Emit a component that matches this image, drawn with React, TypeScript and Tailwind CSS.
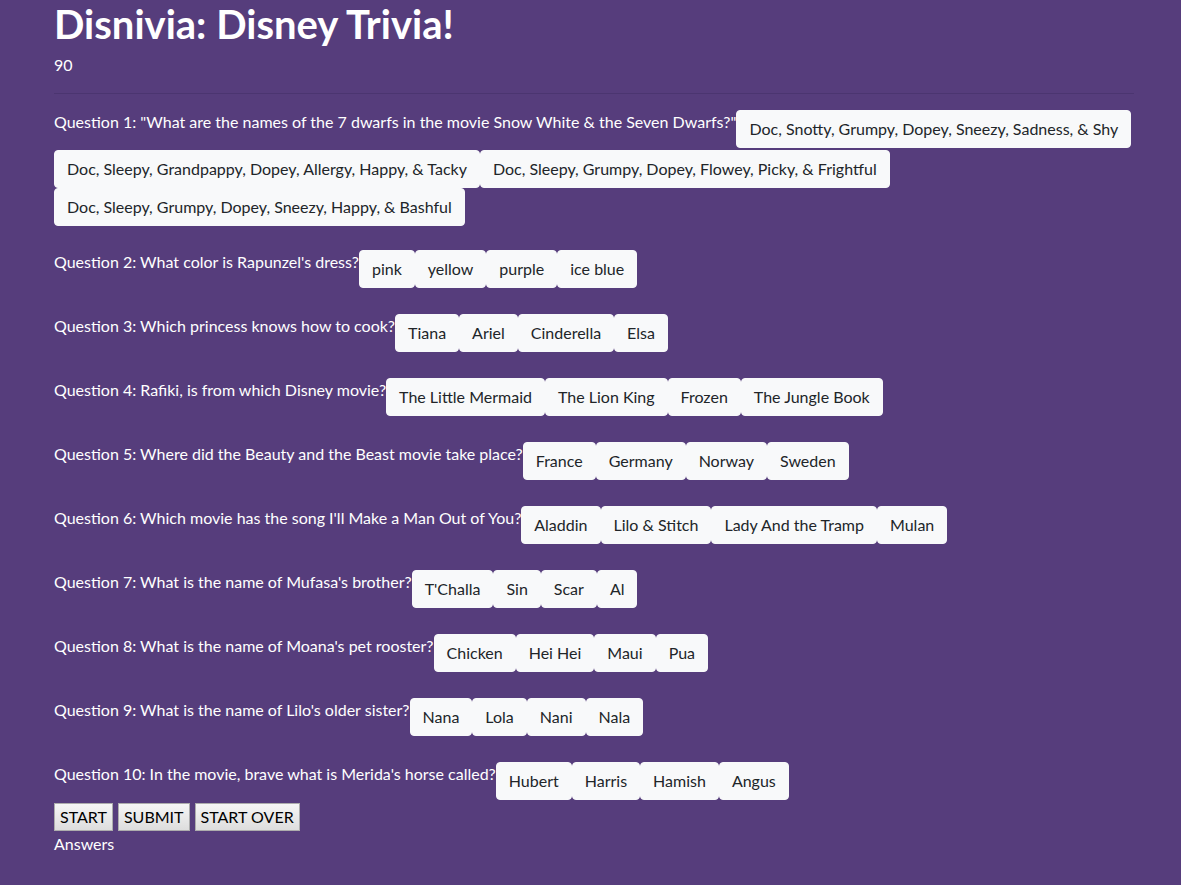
import React from "react";

const questions: { q: string; a: string[] }[] = [
  {
    q: 'Question 1: "What are the names of the 7 dwarfs in the movie Snow White & the Seven Dwarfs?"',
    a: [
      "Doc, Snotty, Grumpy, Dopey, Sneezy, Sadness, & Shy",
      "Doc, Sleepy, Grandpappy, Dopey, Allergy, Happy, & Tacky",
      "Doc, Sleepy, Grumpy, Dopey, Flowey, Picky, & Frightful",
      "Doc, Sleepy, Grumpy, Dopey, Sneezy, Happy, & Bashful",
    ],
  },
  { q: "Question 2: What color is Rapunzel's dress?", a: ["pink", "yellow", "purple", "ice blue"] },
  { q: "Question 3: Which princess knows how to cook?", a: ["Tiana", "Ariel", "Cinderella", "Elsa"] },
  {
    q: "Question 4: Rafiki, is from which Disney movie?",
    a: ["The Little Mermaid", "The Lion King", "Frozen", "The Jungle Book"],
  },
  {
    q: "Question 5: Where did the Beauty and the Beast movie take place?",
    a: ["France", "Germany", "Norway", "Sweden"],
  },
  {
    q: "Question 6: Which movie has the song I'll Make a Man Out of You?",
    a: ["Aladdin", "Lilo & Stitch", "Lady And the Tramp", "Mulan"],
  },
  { q: "Question 7: What is the name of Mufasa's brother?", a: ["T'Challa", "Sin", "Scar", "Al"] },
  { q: "Question 8: What is the name of Moana's pet rooster?", a: ["Chicken", "Hei Hei", "Maui", "Pua"] },
  { q: "Question 9: What is the name of Lilo's older sister?", a: ["Nana", "Lola", "Nani", "Nala"] },
  {
    q: "Question 10: In the movie, brave what is Merida's horse called?",
    a: ["Hubert", "Harris", "Hamish", "Angus"],
  },
];

function Question({ q, a }: { q: string; a: string[] }) {
  return (
    <div className="flex flex-wrap items-start">
      <span className="h-10 leading-6 whitespace-nowrap">{q}</span>
      {a.map((ans) => (
        <button
          key={ans}
          type="button"
          className="h-[38px] px-3 py-[6px] leading-6 text-[16px] bg-[#f8f9fa] text-[#212529] border border-[#f8f9fa] rounded-[4px] whitespace-nowrap"
        >
          {ans}
        </button>
      ))}
    </div>
  );
}

function SysButton({ label }: { label: string }) {
  return (
    <button
      type="button"
      className="h-[28px] px-[5px] text-[16px] leading-5 text-black border border-[#adadad] bg-gradient-to-b from-[#f6f6f6] to-[#dddddd]"
    >
      {label}
    </button>
  );
}

export default function App() {
  return (
    <div
      className="min-h-[885px] bg-[#563d7c] text-white text-[16px] pl-[54px] pr-[40px]"
      style={{ fontFamily: "Lato, 'Liberation Sans', sans-serif" }}
    >
      <h1 className="h-12 leading-[48px] text-[40px] font-bold">Disnivia: Disney Trivia!</h1>
      <div className="mt-[5px] leading-6">90</div>
      <hr className="mt-4 mr-[7px] border-0 border-t border-t-[#4b3570]" />
      <div className="mt-4 flex flex-col gap-6">
        {questions.map((item) => (
          <Question key={item.q} q={item.q} a={item.a} />
        ))}
      </div>
      <div className="mt-px flex gap-[5px]">
        <SysButton label="START" />
        <SysButton label="SUBMIT" />
        <SysButton label="START OVER" />
      </div>
      <div className="mt-px leading-6">Answers</div>
    </div>
  );
}
